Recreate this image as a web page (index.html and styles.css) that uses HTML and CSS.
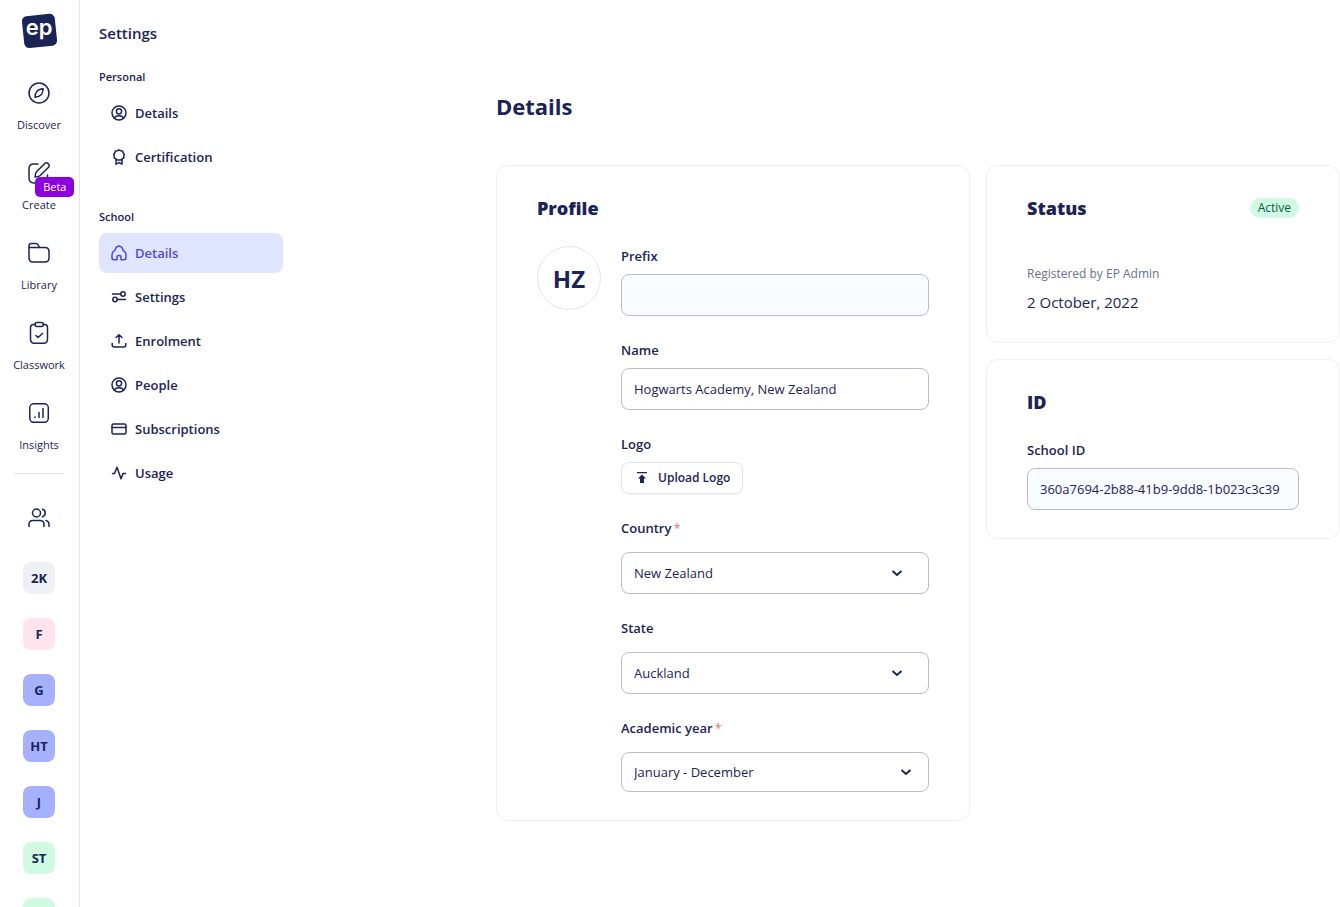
FILE: index.html
```html
<!DOCTYPE html>
<html lang="en">
<head>
  <meta charset="UTF-8" />
  <meta name="viewport" content="width=device-width, initial-scale=1.0" />
  <title>School Details</title>
  <link rel="stylesheet" href="styles.css">
</head>
<body>

  <div class="app">
    <nav class="rail" aria-label="Main">
      <a href="#" class="logo">
        <svg width="38" height="36" viewBox="0 0 38 36">
          <rect x="3" y="2" width="33" height="32" rx="5" fill="#1a2456" transform="rotate(-6 19 18)" />
          <text x="19" y="22" text-anchor="middle" class="logo-text">ep</text>
        </svg>
      </a>

      <div class="rail-links">
        <a href="#" class="rail-link">
          <svg class="icon" width="24" height="24" viewBox="0 0 24 24">
            <circle cx="12" cy="12" r="10" />
            <path d="M16.200 7.800c-.2 2.600-.9 4.600-1.800 5.600-1.400 1.500-3.600 2.500-6.400 2.800.1-2.600.8-4.600 1.800-5.700 1.200-1.500 3.400-2.500 6.400-2.700z" />
          </svg>
          <span>Discover</span>
        </a>
        <a href="#" class="rail-link">
          <svg class="icon" width="24" height="24" viewBox="0 0 24 24">
            <path d="M11 3H6.500C3 3 2 4.500 2 8v8.500C2 20.500 3.500 22 7 22h8c4 0 5.500-1.500 5.500-5v-3" />
            <path d="M18 2.200 9.500 10.800c-.8.900-1.400 3.300-1.500 5.200 2-.1 4.300-.7 5.200-1.500L21.800 6c1.600-1.900-1.900-5.500-3.800-3.800z" />
          </svg>
          <span>Create</span>
          <span class="beta">Beta</span>
        </a>
        <a href="#" class="rail-link">
          <svg class="icon" width="24" height="24" viewBox="0 0 24 24">
            <path d="M2 17V5c0-1.700.8-2.500 2.500-2.500h4.200c1.200 0 1.800.4 2.400 1.300L12.500 6.500H18c3 0 4 1 4 4V17c0 3-1 4-4 4H6c-3 0-4-1-4-4z" />
            <path d="M2.500 6.500h10" />
          </svg>
          <span>Library</span>
        </a>
        <a href="#" class="rail-link">
          <svg class="icon" width="24" height="24" viewBox="0 0 24 24">
            <path d="M8 3.500H6.500c-2 0-3 1.200-3 3V18c0 3 1.200 4.300 4 4.300h9c2.800 0 4-1.300 4-4.300V6.500c0-1.800-1-3-3-3H16" />
            <rect x="8" y="1.500" width="8.500" height="4" rx="2" />
            <path d="m9 14.500 2 2 4.500-4" />
          </svg>
          <span>Classwork</span>
        </a>
        <a href="#" class="rail-link">
          <svg class="icon" width="24" height="24" viewBox="0 0 24 24">
            <rect x="2.800" y="2.800" width="18.500" height="18.500" rx="4" />
            <path d="M8 16v.5M12 11.500v5M16 7.500v9" />
          </svg>
          <span>Insights</span>
        </a>
      </div>

      <hr class="rail-line" />

      <div class="classes">
        <a href="#" class="classes-icon" aria-label="Classes">
          <svg class="icon" width="24" height="24" viewBox="0 0 24 24">
            <circle cx="9.500" cy="7" r="4" />
            <path d="M2 20.500v-2c0-2.500 1.500-4 4-4h7c2.500 0 4 1.500 4 4v2M15.500 3.300c3.600 1 3.600 6.500 0 7.500M19 14.500c2 .5 3 2 3 4v2" />
          </svg>
        </a>
        <a href="#" class="tile grey">2K</a>
        <a href="#" class="tile pink">F</a>
        <a href="#" class="tile indigo">G</a>
        <a href="#" class="tile indigo">HT</a>
        <a href="#" class="tile indigo">J</a>
        <a href="#" class="tile green">ST</a>
        <a href="#" class="tile green" aria-label="Class"></a>
      </div>
    </nav>

    <aside class="sidebar">
      <h2 class="sidebar-title">Settings</h2>

      <section class="menu">
        <h3>Personal</h3>
        <a href="#">
          <svg class="icon" width="16" height="16" viewBox="0 0 16 16">
            <circle cx="8" cy="8" r="7" />
            <circle cx="8" cy="6.300" r="2.600" />
            <path d="M3.500 12.800c1-1.700 2.500-2 4.500-2s3.500.3 4.500 2" />
          </svg>
          Details
        </a>
        <a href="#">
          <svg class="icon" width="16" height="16" viewBox="0 0 16 16">
            <path d="m8 1 1.700.8 1.900.2.500 1.800 1.200 1.400-.6 1.800.2 1.900-1.700.8-1.300 1.400H6.100L4.800 9.700 3.100 8.900l.2-1.900-.6-1.800 1.200-1.400.5-1.800 1.900-.2z" />
            <path d="M5 10.500v4.700l3-1.600 3 1.600v-4.700" />
          </svg>
          Certification
        </a>
      </section>

      <section class="menu">
        <h3>School</h3>
        <a href="#" class="active">
          <svg class="icon" width="16" height="16" viewBox="0 0 16 16">
            <path d="M8 1C6.500 1.300 5 2.200 4.500 3.500L4 5.200 2 7C1.300 8 1 9 1 10.500v2.300c0 1.200.7 1.900 1.900 1.900H6v-3c0-1.700 4-1.700 4 0v3h3.100c1.200 0 1.900-.7 1.900-1.900v-2.300C15 9 14.700 8 14 7l-2-1.800-.5-1.700C11 2.200 9.500 1.300 8 1z" />
          </svg>
          Details
        </a>
        <a href="#">
          <svg class="icon" width="16" height="16" viewBox="0 0 16 16">
            <circle cx="12" cy="5" r="2.200" />
            <circle cx="4" cy="10.500" r="2.200" />
            <path d="M1.500 5h8.300M6.200 10.500h8.300" />
          </svg>
          Settings
        </a>
        <a href="#">
          <svg class="icon" width="16" height="16" viewBox="0 0 16 16">
            <path d="M8 10V2M5 4.500 8 1.700l3 2.800M1.200 10.500v1.500c0 1.500.8 2 2 2h9.600c1.200 0 2-.5 2-2v-1.500" />
          </svg>
          Enrolment
        </a>
        <a href="#">
          <svg class="icon" width="16" height="16" viewBox="0 0 16 16">
            <circle cx="8" cy="8" r="7" />
            <circle cx="8" cy="6.300" r="2.600" />
            <path d="M3.500 12.800c1-1.700 2.500-2 4.500-2s3.500.3 4.500 2" />
          </svg>
          People
        </a>
        <a href="#">
          <svg class="icon" width="16" height="16" viewBox="0 0 16 16">
            <rect x="1" y="3" width="14" height="10" rx="1.500" />
            <path d="M1 6.500h14" />
          </svg>
          Subscriptions
        </a>
        <a href="#">
          <svg class="icon" width="16" height="16" viewBox="0 0 16 16">
            <path d="M1.500 8.500h2L6 2.200l4 11.600 2-5.300h2.500" />
          </svg>
          Usage
        </a>
      </section>
    </aside>

    <main class="content">
      <h1>Details</h1>

      <div class="cards">
        <section class="card">
          <h2>Profile</h2>
          <div class="profile">
            <div class="avatar">HZ</div>
            <form class="fields">
              <div class="field">
                <label for="prefix">Prefix</label>
                <input type="text" id="prefix" name="prefix" readonly />
              </div>
              <div class="field">
                <label for="name">Name</label>
                <input type="text" id="name" name="name" value="Hogwarts Academy, New Zealand" />
              </div>
              <div class="field">
                <label for="logo">Logo</label>
                <button type="button" id="logo" class="upload">
                  <svg width="12" height="12" viewBox="0 0 12 12" fill="currentColor">
                    <path d="M1 0h10v1.300H1zM6 2.500l4 4H8V11H4V6.500H2z" />
                  </svg>
                  Upload Logo
                </button>
              </div>
              <div class="field select-field">
                <label for="country">Country<span class="required">*</span></label>
                <div class="select">
                  <select id="country" name="country">
                    <option>New Zealand</option>
                  </select>
                  <svg class="chevron" width="12" height="12" viewBox="0 0 12 12"><path d="m1.500 4 4.500 4 4.500-4" /></svg>
                </div>
              </div>
              <div class="field select-field">
                <label for="state">State</label>
                <div class="select">
                  <select id="state" name="state">
                    <option>Auckland</option>
                  </select>
                  <svg class="chevron" width="12" height="12" viewBox="0 0 12 12"><path d="m1.500 4 4.500 4 4.500-4" /></svg>
                </div>
              </div>
              <div class="field select-field">
                <label for="year">Academic year<span class="required">*</span></label>
                <div class="select compact">
                  <select id="year" name="year">
                    <option>January - December</option>
                  </select>
                  <svg class="chevron" width="12" height="12" viewBox="0 0 12 12"><path d="m1.500 4 4.500 4 4.500-4" /></svg>
                </div>
              </div>
            </form>
          </div>
        </section>

        <div class="side">
          <section class="card">
            <div class="card-head">
              <h2>Status</h2>
              <span class="badge">Active</span>
            </div>
            <div class="registered">
              <p class="note">Registered by EP Admin</p>
              <p class="date">2 October, 2022</p>
            </div>
          </section>

          <section class="card">
            <h2>ID</h2>
            <div class="field">
              <label for="schoolId">School ID</label>
              <input type="text" id="schoolId" value="360a7694-2b88-41b9-9dd8-1b023c3c39" readonly />
            </div>
          </section>
        </div>
      </div>
    </main>
  </div>

</body>
</html>
```
FILE: styles.css
```css
* {
  box-sizing: border-box;
}

body {
  font-family: "Open Sans", "Noto Sans", sans-serif;
  font-size: 13px;
  line-height: 20px;
  margin: 0;
  color: #1a2456;
  background-color: white;
}

h1, h2, h3, p {
  margin: 0;
}

a {
  color: inherit;
  text-decoration: none;
}

.icon {
  fill: none;
  stroke: currentColor;
  stroke-width: 1.5;
  stroke-linecap: round;
  stroke-linejoin: round;
  flex-shrink: 0;
}

.app {
  display: flex;
}

/* left rail */
.rail {
  flex: 0 0 80px;
  height: 100vh;
  overflow: hidden;
  padding: 13px 1px 0 0;
  border-right: 1px solid #e2e4ea;
  display: flex;
  flex-direction: column;
  align-items: center;
}

.logo svg {
  display: block;
  overflow: visible;
}

.logo-text {
  font-family: "Inter", sans-serif;
  font-size: 22px;
  line-height: 24px;
  font-weight: 600;
  fill: white;
}

.rail-links {
  margin-top: 32px;
  display: flex;
  flex-direction: column;
  gap: 28px;
}

.rail-link {
  position: relative;
  display: flex;
  flex-direction: column;
  align-items: center;
  gap: 12px;
  font-size: 11px;
  line-height: 16px;
  font-weight: 500;
}

.beta {
  position: absolute;
  top: 16px;
  left: 22px;
  padding: 2px 8px;
  border-radius: 5px;
  background-color: #8b00dc;
  color: white;
}

.rail-line {
  width: 50px;
  margin: 20px 0 32px;
  border: 0;
  border-top: 1px solid #e2e4ea;
  flex-shrink: 0;
}

.classes {
  display: flex;
  flex-direction: column;
  align-items: center;
  gap: 24px;
}

.classes-icon {
  height: 32px;
}

.tile {
  width: 32px;
  height: 32px;
  border-radius: 8px;
  line-height: 32px;
  text-align: center;
  font-weight: 700;
  flex-shrink: 0;
}

.grey {
  background-color: #edf0f5;
}

.pink {
  background-color: #ffe4ee;
}

.indigo {
  background-color: #a5b1fc;
}

.green {
  background-color: #d1fae3;
}

/* settings menu */
.sidebar {
  flex: 0 0 203px;
  padding: 23px 0 0 19px;
}

.sidebar-title {
  font-size: 15px;
  font-weight: 600;
  margin-bottom: 24px;
}

.menu {
  display: flex;
  flex-direction: column;
  gap: 4px;
  margin-bottom: 30px;
}

.menu h3 {
  font-size: 11px;
  line-height: 20px;
  font-weight: 600;
  margin-bottom: 2px;
}

.menu a {
  display: flex;
  align-items: center;
  gap: 8px;
  height: 40px;
  padding: 0 12px;
  border-radius: 8px;
  font-weight: 600;
}

.menu a.active {
  background-color: #e0e6ff;
  color: #5046e5;
}

/* main */
.content {
  flex: 1;
  min-width: 0;
  padding: 90px 0 40px 213px;
}

h1 {
  font-size: 22px;
  line-height: 32px;
  font-weight: 700;
  margin-bottom: 43px;
}

.cards {
  display: grid;
  grid-template-columns: 474fr 354fr;
  gap: 16px;
  align-items: start;
}

.side {
  display: grid;
  gap: 16px;
  min-width: 0;
}

.card {
  min-width: 0;
  padding: 28px 40px;
  border: 1px solid #eeeff4;
  border-radius: 12px;
}

.card h2 {
  font-size: 18px;
  line-height: 28px;
  font-weight: 800;
  margin-bottom: 24px;
}

.card-head {
  display: flex;
  justify-content: space-between;
  align-items: center;
  margin-bottom: 44px;
}

.card .card-head h2 {
  margin-bottom: 0;
}

.badge {
  padding: 0 8px;
  border-radius: 10px;
  background-color: #d1fae3;
  color: #065f46;
  font-size: 12px;
  font-weight: 500;
}

.profile {
  display: flex;
  gap: 20px;
}

.avatar {
  flex: 0 0 64px;
  height: 64px;
  border: 1px solid #e5e7eb;
  border-radius: 50%;
  line-height: 64px;
  text-align: center;
  font-size: 24px;
  font-weight: 700;
}

.fields {
  flex: 1;
  min-width: 0;
  display: flex;
  flex-direction: column;
  gap: 24px;
}

.field {
  display: flex;
  flex-direction: column;
  align-items: flex-start;
  gap: 8px;
}

.select-field {
  gap: 14px;
}

label {
  font-weight: 600;
}

.required {
  color: #f87171;
  font-weight: 400;
  margin-left: 2px;
}

input, select {
  width: 100%;
  height: 42px;
  padding: 0 12px;
  border: 1px solid #b9bccb;
  border-radius: 8px;
  background-color: white;
  color: inherit;
  font: inherit;
}

input[readonly] {
  background-color: #f8fbff;
}

.select {
  position: relative;
  width: 100%;
}

select {
  display: block;
  appearance: none;
}

.compact select {
  height: 40px;
}

.chevron {
  position: absolute;
  top: 50%;
  right: 26px;
  margin-top: -6px;
  fill: none;
  stroke: currentColor;
  stroke-width: 2;
  pointer-events: none;
}

.compact .chevron {
  right: 17px;
}

.upload {
  display: flex;
  align-items: center;
  gap: 10px;
  height: 32px;
  padding: 0 12px 0 14px;
  border: 1px solid #e2e4ea;
  border-radius: 8px;
  background-color: white;
  box-shadow: 0 1px 2px rgba(0,0,0,0.05);
  color: inherit;
  font: inherit;
  font-size: 12px;
  font-weight: 600;
}

.registered {
  display: grid;
  gap: 8px;
}

.note {
  font-size: 12px;
  line-height: 16px;
  color: #6b7288;
}

.date {
  font-size: 15px;
  line-height: 24px;
}
```
